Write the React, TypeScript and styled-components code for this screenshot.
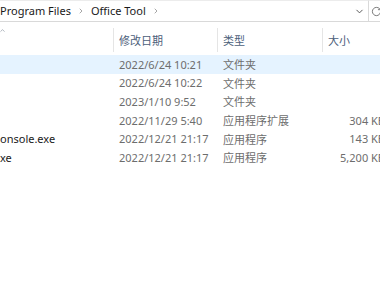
import React from 'react'
import styled, { createGlobalStyle } from 'styled-components'
import { ChevronRight, ChevronDown, ChevronUp, RotateCw } from 'lucide-react'

const GlobalStyle = createGlobalStyle`
  body {
    margin: 0;
    background: #fff;
    font-family: "Noto Sans", "Noto Sans CJK SC", sans-serif;
    font-size: 11px;
    overflow: hidden;
  }
`

const files = [
  { name: '', date: '2022/6/24 10:21', type: '文件夹', size: '', active: true },
  { name: '', date: '2022/6/24 10:22', type: '文件夹', size: '' },
  { name: '', date: '2023/1/10 9:52', type: '文件夹', size: '' },
  { name: '', date: '2022/11/29 5:40', type: '应用程序扩展', size: '304 KB' },
  { name: 'onsole.exe', date: '2022/12/21 21:17', type: '应用程序', size: '143 KB' },
  { name: 'xe', date: '2022/12/21 21:17', type: '应用程序', size: '5,200 KB' },
]

const App = () => {
  return (
    <Window>
      <GlobalStyle />
      <AddressRow>
        <AddressBox>
          <Crumbs>
            <Crumb>Program Files</Crumb>
            <CrumbArrow><ChevronRight size={8} strokeWidth={2} /></CrumbArrow>
            <Crumb>Office Tool</Crumb>
            <CrumbArrow><ChevronRight size={8} strokeWidth={2} /></CrumbArrow>
          </Crumbs>
          <Dropdown><ChevronDown size={11} strokeWidth={2} /></Dropdown>
        </AddressBox>
        <RefreshBox><RotateCw size={11} strokeWidth={1.6} /></RefreshBox>
      </AddressRow>

      <Header>
        <HeaderCell first>
          <SortArrow><ChevronUp size={7} strokeWidth={2} /></SortArrow>
        </HeaderCell>
        <HeaderCell>修改日期</HeaderCell>
        <HeaderCell>类型</HeaderCell>
        <HeaderCell>大小</HeaderCell>
      </Header>

      <List>
        {files.map((f, i) => (
          <Row key={i} active={f.active}>
            <NameCell>{f.name}</NameCell>
            <InfoCell>{f.date}</InfoCell>
            <InfoCell>{f.type}</InfoCell>
            <SizeCell>{f.size}</SizeCell>
          </Row>
        ))}
      </List>
    </Window>
  )
}

const Window = styled.div`
  width: 380px;
  height: 282px;
  overflow: hidden;
  background: #fff;
`

const AddressRow = styled.div`
  display: flex;
  height: 22px;
  width: 392px;
`

const AddressBox = styled.div`
  flex: 1;
  display: flex;
  align-items: center;
  justify-content: space-between;
  border-top: 1px solid #ececec;
  border-bottom: 1px solid #d9d9d9;
  border-right: 1px solid #d9d9d9;
  padding-right: 3px;
`

const Crumbs = styled.div`
  display: flex;
  align-items: center;
`

const Crumb = styled.span`
  color: #1a1a1a;
  font-size: 11px;
  line-height: 20px;
`

const CrumbArrow = styled.span`
  display: flex;
  align-items: center;
  color: #7a7a7a;
  padding: 0 6px 0 6px;
`

const Dropdown = styled.span`
  display: flex;
  color: #4d4d4d;
`

const RefreshBox = styled.div`
  width: 21px;
  display: flex;
  align-items: center;
  padding-left: 2px;
  color: #4d4d4d;
  border-top: 1px solid #ececec;
  border-bottom: 1px solid #d9d9d9;
`

const Header = styled.div`
  display: grid;
  grid-template-columns: 113px 104px 105px 70px;
  height: 24px;
  margin-top: 6px;
  width: 393px;
`

const HeaderCell = styled.div<{ first?: boolean }>`
  position: relative;
  display: flex;
  align-items: center;
  padding-left: 5px;
  color: #4c607a;
  border-left: ${p => (p.first ? 'none' : '1px solid #e5e5e5')};
`

const SortArrow = styled.span`
  position: absolute;
  left: -1px;
  top: -1px;
  display: flex;
  color: #7a8593;
`

const List = styled.div`
  margin-top: 3px;
  width: 393px;
`

const Row = styled.div<{ active?: boolean }>`
  display: grid;
  grid-template-columns: 113px 104px 105px 70px;
  height: 18.6px;
  align-items: center;
  background: ${p => (p.active ? '#e5f3ff' : 'transparent')};
  white-space: nowrap;
`

const NameCell = styled.div`
  color: #1a1a1a;
`

const InfoCell = styled.div`
  color: #6d6d6d;
  padding-left: 6px;
`

const SizeCell = styled.div`
  color: #6d6d6d;
  text-align: right;
  padding-right: 7px;
`

export default App
